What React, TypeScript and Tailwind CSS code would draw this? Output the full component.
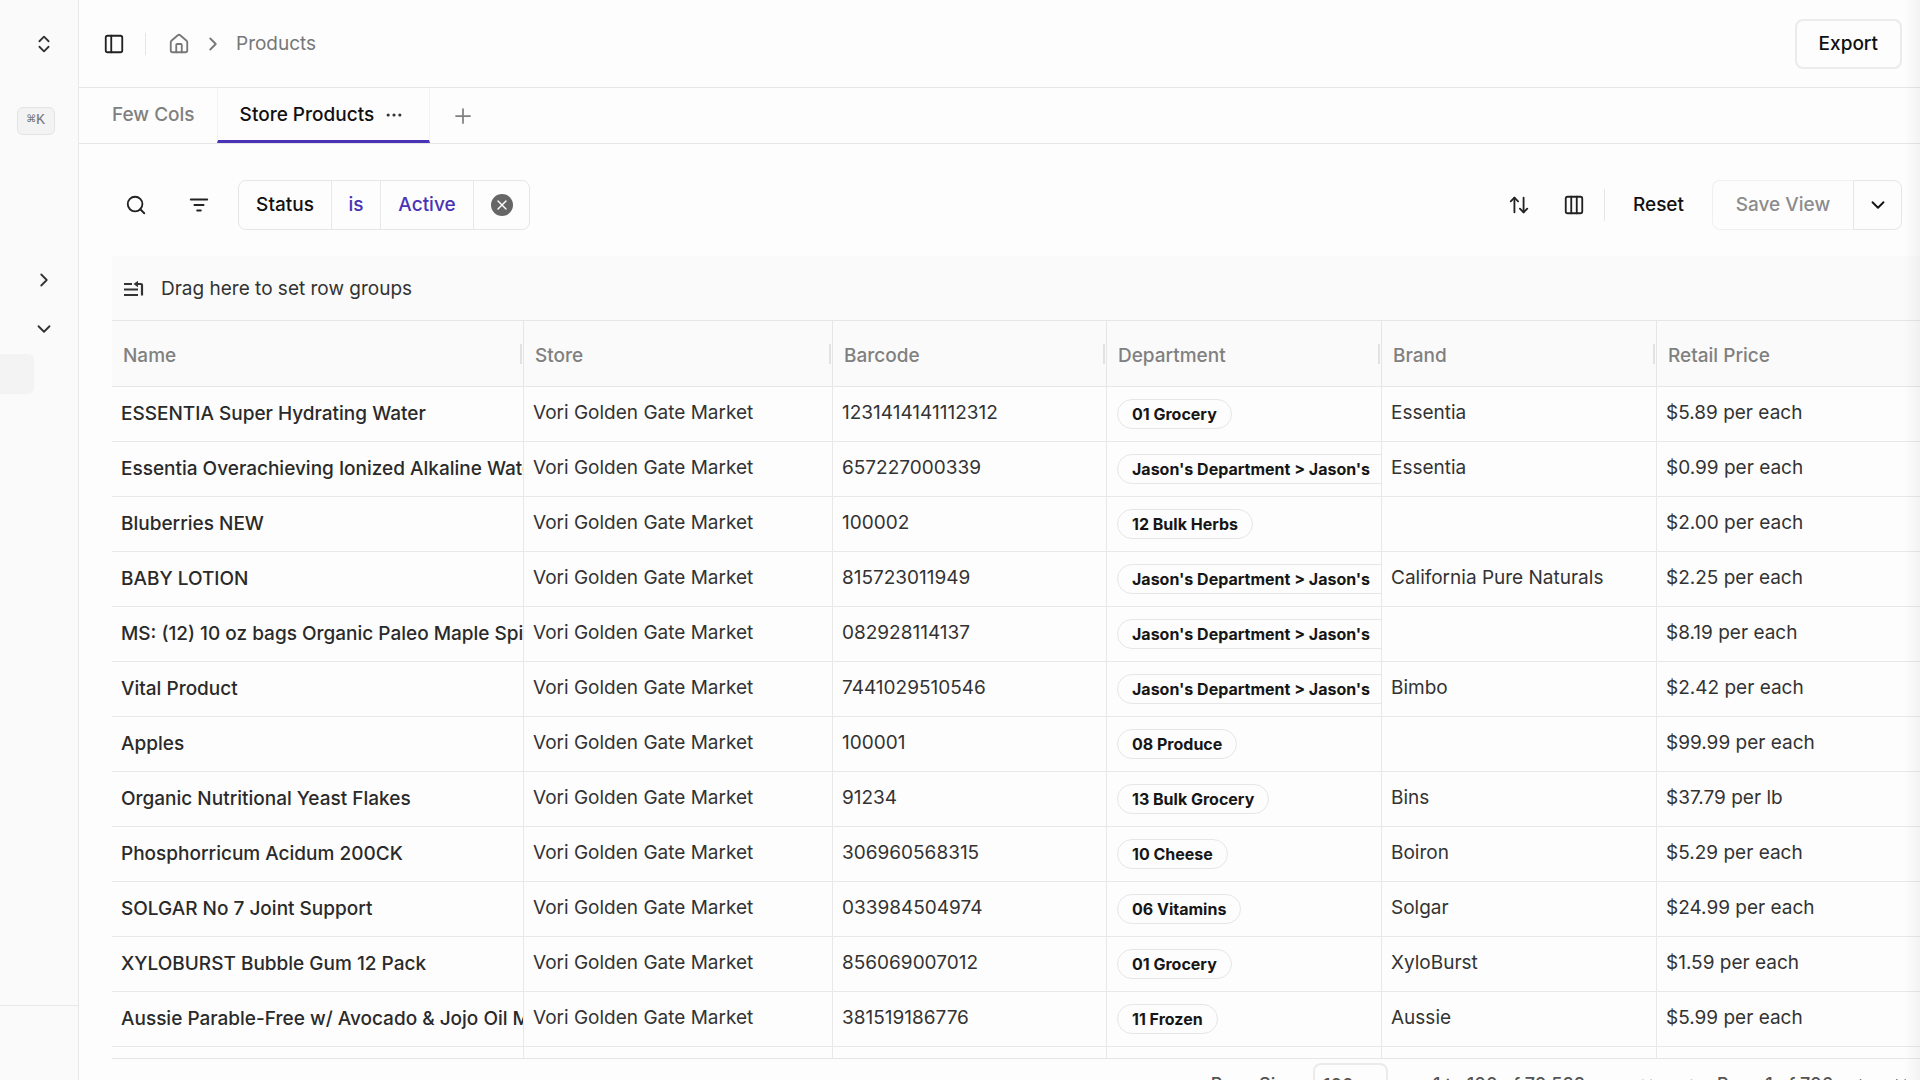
import React from "react";
import {
  ArrowUpDown,
  ChevronDown,
  ChevronFirst,
  ChevronLast,
  ChevronLeft,
  ChevronRight,
  ChevronsUpDown,
  Columns3,
  Ellipsis,
  House,
  PanelLeft,
  Plus,
  Search,
  X,
} from "lucide-react";

type Product = {
  name: string;
  barcode: string;
  department: string;
  brand: string;
  price: string;
};

const JASON = "Jason's Department > Jason's";

const products: Product[] = [
  { name: "ESSENTIA Super Hydrating Water", barcode: "1231414141112312", department: "01 Grocery", brand: "Essentia", price: "$5.89 per each" },
  { name: "Essentia Overachieving Ionized Alkaline Water", barcode: "657227000339", department: JASON, brand: "Essentia", price: "$0.99 per each" },
  { name: "Bluberries NEW", barcode: "100002", department: "12 Bulk Herbs", brand: "", price: "$2.00 per each" },
  { name: "BABY LOTION", barcode: "815723011949", department: JASON, brand: "California Pure Naturals", price: "$2.25 per each" },
  { name: "MS: (12) 10 oz bags Organic Paleo Maple Spice", barcode: "082928114137", department: JASON, brand: "", price: "$8.19 per each" },
  { name: "Vital Product", barcode: "7441029510546", department: JASON, brand: "Bimbo", price: "$2.42 per each" },
  { name: "Apples", barcode: "100001", department: "08 Produce", brand: "", price: "$99.99 per each" },
  { name: "Organic Nutritional Yeast Flakes", barcode: "91234", department: "13 Bulk Grocery", brand: "Bins", price: "$37.79 per lb" },
  { name: "Phosphorricum Acidum 200CK", barcode: "306960568315", department: "10 Cheese", brand: "Boiron", price: "$5.29 per each" },
  { name: "SOLGAR No 7 Joint Support", barcode: "033984504974", department: "06 Vitamins", brand: "Solgar", price: "$24.99 per each" },
  { name: "XYLOBURST Bubble Gum 12 Pack", barcode: "856069007012", department: "01 Grocery", brand: "XyloBurst", price: "$1.59 per each" },
  { name: "Aussie Parable-Free w/ Avocado & Jojo Oil M", barcode: "381519186776", department: "11 Frozen", brand: "Aussie", price: "$5.99 per each" },
];

const columns = ["Name", "Store", "Barcode", "Department", "Brand", "Retail Price"];

function FilterIcon() {
  return (
    <svg width="22" height="22" viewBox="0 0 24 24" fill="none" stroke="currentColor" strokeWidth="2" strokeLinecap="round" aria-hidden="true">
      <path d="M3 6h18M7 12h10M10 18h4" />
    </svg>
  );
}

function RowGroupIcon() {
  return (
    <svg width="20" height="16" viewBox="0 0 20 16" fill="none" stroke="currentColor" strokeWidth="2.2" aria-hidden="true">
      <path d="M0 3h8M0 8.500h14M0 14h14" />
      <path d="M13 3h4a1 1 0 0 1 1 1v10.500" />
      <path d="M9.500 3l4.500-3.200v6.400z" fill="currentColor" stroke="none" />
    </svg>
  );
}

function Sidebar() {
  return (
    <aside className="flex w-[79px] shrink-0 flex-col border-r border-[#e8e8e8] bg-[#fafafa] text-[#333]">
      <div className="flex h-[88px] items-center justify-end pr-[23px]">
        <button aria-label="Switch workspace"><ChevronsUpDown size={22} /></button>
      </div>
      <div className="flex h-[66px] items-center justify-end pr-[23px]">
        <kbd className="flex h-7 w-[38px] items-center justify-center rounded-md border border-[#e4e4e4] bg-[#f3f3f3] font-['Liberation_Mono','DejaVu_Sans_Mono',monospace] text-[15px] text-[#777]">⌘K</kbd>
      </div>
      <div className="mt-[102px] flex h-12 items-center justify-end pr-[23px]">
        <button aria-label="Expand section"><ChevronRight size={22} /></button>
      </div>
      <div className="flex h-[50px] items-center justify-end pr-[23px]">
        <button aria-label="Collapse section"><ChevronDown size={22} /></button>
      </div>
      <div className="mr-11 h-10 rounded-r-md bg-[#f3f3f3]" />
      <div className="mt-auto h-[75px] border-t border-[#e8e8e8]" />
    </aside>
  );
}

function Header() {
  return (
    <header className="flex h-[88px] shrink-0 items-center justify-between border-b border-[#e6e6e6] pt-px pr-[18px] pl-6">
      <nav className="flex items-center" aria-label="Breadcrumb">
        <button aria-label="Toggle sidebar" className="text-[#222]"><PanelLeft size={22} /></button>
        <span className="ml-5 h-[22px] w-px bg-[#e6e6e6]" />
        <a href="#home" aria-label="Home" className="ml-[22px] text-[#777]"><House size={22} /></a>
        <ChevronRight size={22} className="ml-3 text-[#777]" />
        <a href="#products" className="ml-3 text-[19px] text-[#777]">Products</a>
      </nav>
      <button className="h-[50px] rounded-lg border-2 border-[#ebebeb] px-[22px] text-[19px] font-medium text-[#111]">Export</button>
    </header>
  );
}

function Tabs() {
  return (
    <div className="flex h-14 shrink-0 items-stretch border-b border-[#e6e6e6] text-[19px] font-medium">
      <button className="ml-[33px] pb-px text-[#808080]">Few Cols</button>
      <div className="ml-[22px] flex items-center border-x border-b-[3px] border-x-[#f3f3f3] border-b-[#4a33b5] pt-0.5 pr-[25px] pl-[22px] text-[#111]">
        <button>Store Products</button>
        <button aria-label="View options" className="ml-[10px] text-[#333]"><Ellipsis size={20} strokeWidth={1.75} /></button>
      </div>
      <button aria-label="Add view" className="ml-[21px] text-[#808080]"><Plus size={24} strokeWidth={1.75} /></button>
    </div>
  );
}

function Toolbar() {
  return (
    <div className="flex shrink-0 items-center justify-between pt-9 pr-[18px] pb-[26px] pl-[46px] text-[19px] font-medium text-[#111]">
      <div className="flex items-center">
        <button aria-label="Search" className="text-[#222]"><Search size={22} /></button>
        <button aria-label="Filter" className="ml-[41px] text-[#222]"><FilterIcon /></button>
        <div className="ml-7 flex h-[50px] items-stretch divide-x divide-[#e8e8e8] rounded-lg border border-[#e6e6e6]">
          <button className="w-[93px]">Status</button>
          <button className="w-[49px] text-[#4a33b5]">is</button>
          <button className="w-[93px] text-[#4a33b5]">Active</button>
          <button aria-label="Remove filter" className="flex w-[55px] items-center justify-center">
            <span className="flex size-[22px] items-center justify-center rounded-full bg-[#666] text-white"><X size={16} /></span>
          </button>
        </div>
      </div>
      <div className="flex items-center">
        <button aria-label="Sort" className="text-[#222]"><ArrowUpDown size={22} /></button>
        <button aria-label="Columns" className="ml-[33px] text-[#222]"><Columns3 size={22} /></button>
        <span className="ml-[19px] h-8 w-px bg-[#e6e6e6]" />
        <button className="ml-7">Reset</button>
        <div className="ml-7 flex h-[50px] items-stretch">
          <button className="w-[141px] rounded-l-lg border border-r-0 border-[#f0f0f0] text-[#8c8c8c]">Save View</button>
          <button aria-label="More save options" className="flex w-[49px] items-center justify-center rounded-r-lg border border-[#e6e6e6]"><ChevronDown size={22} /></button>
        </div>
      </div>
    </div>
  );
}

const cell = "h-[55px] overflow-hidden whitespace-nowrap border-b border-r border-[#e8e8e8] pl-[9px] text-left align-middle last:border-r-0";
const stub = "h-[11px] border-r border-[#e8e8e8] last:border-r-0";

function DepartmentBadge({ label }: { label: string }) {
  const padding = label.includes(">") ? "pl-[14px] pr-8" : "px-[14px]";
  return (
    <span className={`ml-px flex h-[30px] w-max items-center rounded-full border border-[#e6e6e6] text-[16px] font-bold text-[#161616] ${padding}`}>{label}</span>
  );
}

function Grid() {
  return (
    <div className="ml-[33px] shrink-0 overflow-hidden border-b border-[#e6e6e6]">
      <div className="flex h-16 items-center bg-[#fafafa] pt-0.5 pl-3 text-[19px] text-[#333]">
        <RowGroupIcon />
        <span className="ml-[17px]">Drag here to set row groups</span>
      </div>
      <table className="w-full table-fixed border-separate border-spacing-0 text-[19px] text-[#333]">
        <colgroup>
          <col className="w-[412px]" />
          <col className="w-[309px]" />
          <col className="w-[274px]" />
          <col className="w-[275px]" />
          <col className="w-[275px]" />
          <col />
        </colgroup>
        <thead>
          <tr>
            {columns.map((column) => (
              <th key={column} scope="col" className="h-[67px] border-y border-r border-[#e6e6e6] bg-[#fafafa] p-0 pl-[11px] font-medium text-[#808080] last:border-r-0">
                <div className="flex items-center justify-between">
                  <span className="pt-1.5">{column}</span>
                  {column !== "Retail Price" && <span className="mr-px h-5 w-0.5 bg-[#e2e2e2]" />}
                </div>
              </th>
            ))}
          </tr>
        </thead>
        <tbody>
          {products.map((product) => (
            <tr key={product.name}>
              <td className={`${cell} pt-px font-medium text-[#2a2a2a]`}>{product.name}</td>
              <td className={`${cell} pb-px`}>Vori Golden Gate Market</td>
              <td className={`${cell} pb-px`}>{product.barcode}</td>
              <td className={`${cell} pb-px`}>
                <DepartmentBadge label={product.department} />
              </td>
              <td className={`${cell} pb-px`}>{product.brand}</td>
              <td className={`${cell} pb-px`}>{product.price}</td>
            </tr>
          ))}
          <tr aria-hidden="true">
            {columns.map((column) => (
              <td key={column} className={stub} />
            ))}
          </tr>
        </tbody>
      </table>
    </div>
  );
}

function Pagination() {
  return (
    <footer className="flex shrink-0 items-start justify-end pt-1 pr-[9px] text-[18px] text-[#555]">
      <label htmlFor="page-size" className="mt-2 font-medium">Page Size:</label>
      <select id="page-size" defaultValue="100" className="ml-3 h-11 w-[75px] appearance-none rounded-lg border-2 border-[#ebebeb] bg-transparent px-2 font-medium">
        <option>100</option>
      </select>
      <span className="mt-2 ml-[45px] font-medium">1 to 100 of 70,588</span>
      <button aria-label="First page" className="mt-3 ml-[52px] text-[#bbb]"><ChevronFirst size={20} /></button>
      <button aria-label="Previous page" className="mt-3 ml-[22px] text-[#bbb]"><ChevronLeft size={20} /></button>
      <span className="mt-2 ml-[18px] font-medium">Page 1 of 706</span>
      <button aria-label="Next page" className="mt-3 ml-5"><ChevronRight size={20} /></button>
      <button aria-label="Last page" className="mt-3 ml-[18px]"><ChevronLast size={20} /></button>
    </footer>
  );
}

export default function App() {
  return (
    <div className="relative flex h-screen overflow-hidden bg-[#fdfdfd] font-['Inter',sans-serif]">
      <Sidebar />
      <main className="flex min-w-0 flex-1 flex-col overflow-hidden">
        <Header />
        <Tabs />
        <Toolbar />
        <Grid />
        <Pagination />
      </main>
      <div className="pointer-events-none absolute inset-y-0 right-0 w-4 bg-linear-to-r from-transparent to-black/4" />
    </div>
  );
}
